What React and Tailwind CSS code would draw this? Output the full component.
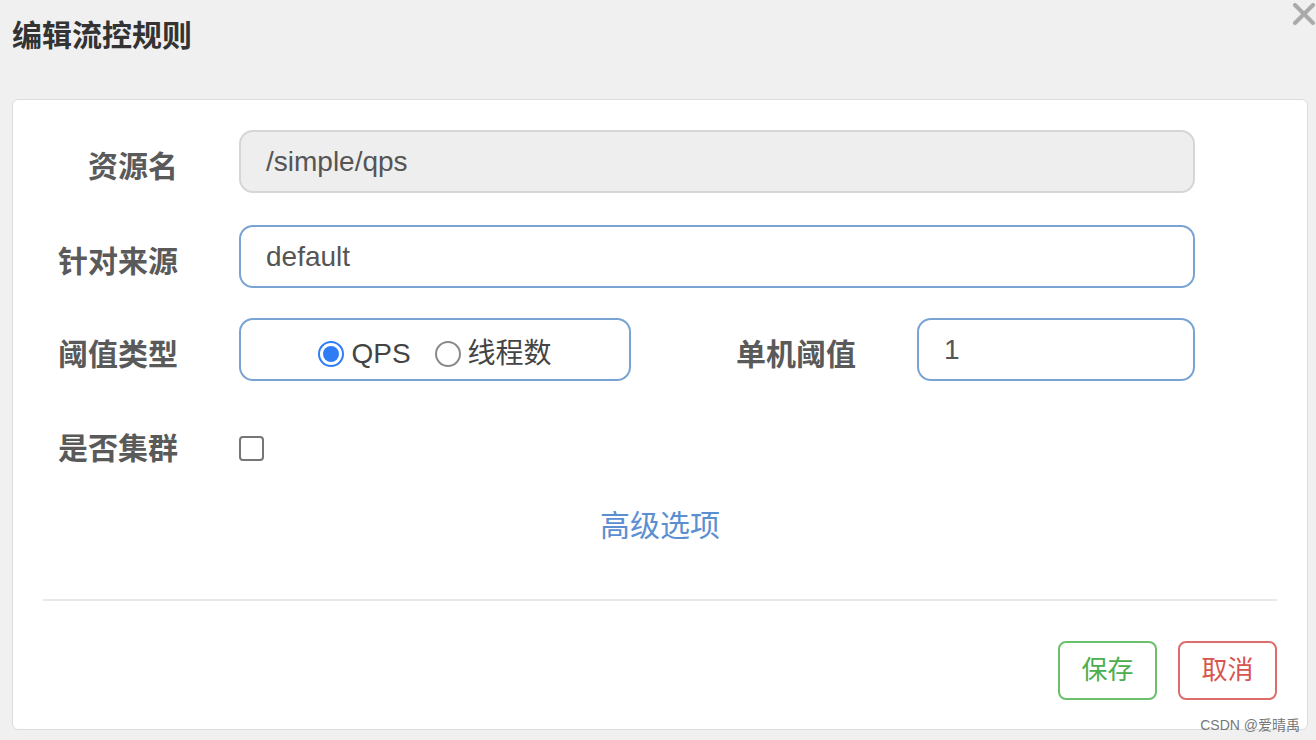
import React from "react";

const font = {
  fontFamily: '"Liberation Sans", Arial, "Noto Sans CJK SC", sans-serif',
};

const Label = ({ children, className = "" }) => (
  <div
    className={`text-[30px] font-bold text-[#5a5a5a] text-right leading-none ${className}`}
  >
    {children}
  </div>
);

const Radio = ({ checked, label }) => (
  <label className="flex items-center gap-[7px] mt-[8px]">
    {checked ? (
      <span className="w-[26px] h-[26px] rounded-full border-[2px] border-[#2f7df6] flex items-center justify-center">
        <span className="w-[16px] h-[16px] rounded-full bg-[#2f7df6]" />
      </span>
    ) : (
      <span className="w-[26px] h-[26px] rounded-full border-[2px] border-[#8a8a8a] bg-white" />
    )}
    <span className="text-[28px] text-[#444] leading-none">{label}</span>
  </label>
);

export default function App() {
  return (
    <div
      className="relative w-[1316px] h-[740px] bg-[#f0f0f0] overflow-hidden"
      style={font}
    >
      {/* Header */}
      <div className="h-[99px] pl-[12px] pt-[20px]">
        <h3 className="text-[30px] font-bold text-[#333] leading-[32px]">
          编辑流控规则
        </h3>
      </div>
      <button className="absolute top-[3px] right-[1px] w-[22px] h-[22px]">
        <svg viewBox="0 0 22 22" width="22" height="22">
          <path
            d="M2 2 L20 20 M20 2 L2 20"
            stroke="#aaaaaa"
            strokeWidth="4"
            strokeLinecap="round"
          />
        </svg>
      </button>

      {/* Card */}
      <div className="ml-[12px] w-[1296px] h-[631px] bg-white border border-[#dcdcdc] rounded-[6px] pt-[30px]">
        {/* row 1 */}
        <div className="flex items-center h-[63px]">
          <Label className="w-[165px] mt-[10px]">资源名</Label>
          <div className="ml-[61px] w-[956px] h-[63px] rounded-[14px] bg-[#eeeeee] border-2 border-[#d6d6d6] flex items-center px-[25px] text-[28px] text-[#555]">
            /simple/qps
          </div>
        </div>

        {/* row 2 */}
        <div className="flex items-center h-[63px] mt-[32px]">
          <Label className="w-[165px] mt-[10px]">针对来源</Label>
          <div className="ml-[61px] w-[956px] h-[63px] rounded-[14px] bg-white border-2 border-[#79a3d3] flex items-center px-[25px] text-[28px] text-[#555]">
            default
          </div>
        </div>

        {/* row 3 */}
        <div className="flex items-center h-[63px] mt-[30px]">
          <Label className="w-[165px] mt-[10px]">阈值类型</Label>
          <div className="ml-[61px] w-[392px] h-[63px] rounded-[14px] bg-white border-2 border-[#79a3d3] flex items-center justify-center gap-[24px]">
            <Radio checked label="QPS" />
            <Radio label="线程数" />
          </div>
          <Label className="w-[225px] mt-[10px]">单机阈值</Label>
          <div className="ml-[61px] w-[278px] h-[63px] rounded-[14px] bg-white border-2 border-[#79a3d3] flex items-center px-[25px] text-[28px] text-[#555]">
            1
          </div>
        </div>

        {/* row 4 */}
        <div className="flex items-center h-[63px] mt-[36px]">
          <Label className="w-[165px]">是否集群</Label>
          <div className="ml-[61px] w-[25px] h-[25px] rounded-[4px] border-2 border-[#767676] bg-white" />
        </div>

        {/* advanced */}
        <div className="mt-[29px] text-center text-[30px] leading-[34px] text-[#5b8fd1]">
          高级选项
        </div>

        <div className="mx-[30px] mt-[56px] border-t-2 border-[#e8e8e8]" />

        <div className="flex justify-end gap-[21px] pr-[30px] mt-[40px]">
          <button className="w-[99px] h-[59px] rounded-[8px] border-2 border-[#6cbf6c] bg-white text-[26px] text-[#4cae4c]">
            保存
          </button>
          <button className="w-[99px] h-[59px] rounded-[8px] border-2 border-[#dd6c6c] bg-white text-[26px] text-[#d9534f]">
            取消
          </button>
        </div>
      </div>

      <div className="absolute right-[16px] bottom-[8px] text-[14px] leading-none text-[#777]">
        CSDN @爱晴禹
      </div>
    </div>
  );
}
